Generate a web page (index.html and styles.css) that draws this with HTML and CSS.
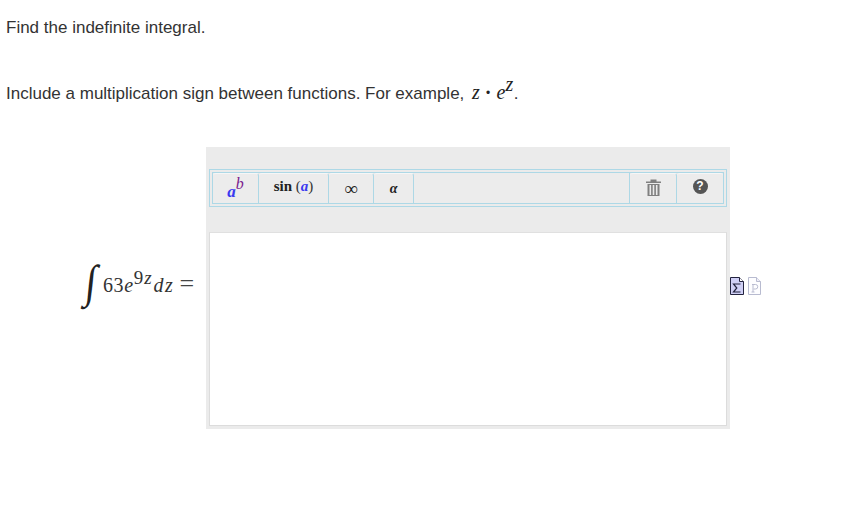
FILE: index.html
```html
<!DOCTYPE html>
<html lang="en">
<head>
<meta charset="utf-8">
<title>Find the indefinite integral</title>
<link rel="stylesheet" href="styles.css">
</head>
<body>
<p class="prompt first">Find the indefinite integral.</p>
<p class="prompt second">Include a multiplication sign between functions. For example, <span class="math inline-math"><i>z</i><span class="dot">·</span><i>e</i><sup class="sup-z"><i>z</i></sup></span>.</p>
<div class="question">
  <div class="label">
    <span class="integral">∫</span>
    <span class="math formula">63<i>e</i><sup class="sup-9">9<i>z</i></sup><i class="dz">dz</i><span class="equals">=</span></span>
  </div>
  <div class="editor">
    <div class="toolbar">
      <div class="toolbar-inner">
        <div class="tool tool-power"><span class="math"><i class="blue">a</i><sup class="purple"><i>b</i></sup></span></div>
        <div class="tool tool-sin"><span class="math sin">sin<span class="paren"> (</span><i class="blue">a</i><span class="paren">)</span></span></div>
        <div class="tool tool-inf"><span class="math">∞</span></div>
        <div class="tool tool-alpha"><span class="math"><i>α</i></span></div>
        <div class="tool tool-spacer"></div>
        <div class="tool tool-trash">
          <svg width="15" height="17" viewBox="0 0 15 17" aria-hidden="true">
            <path d="M0 2.500h15v1.500h-15zM4.500 0.500h6v2h-6z" fill="#808080"/>
            <path d="M1.500 5h12v12h-12zM3.500 6v10h1.600v-10zM6.700 6v10h1.600v-10zM9.900 6v10h1.600v-10z" fill="#808080" fill-rule="evenodd"/>
          </svg>
        </div>
        <div class="tool tool-help"><span class="help">?</span></div>
      </div>
    </div>
    <div class="answer"></div>
  </div>
  <div class="doc-icons">
    <svg width="14" height="18" viewBox="0 0 14 18" aria-hidden="true">
      <path d="M0.500 0.500h9l4 4v13h-13z" fill="#cfcff5" stroke="#23233f"/>
      <path d="M9.500 0.500v4h4" fill="#fff" stroke="#23233f"/>
      <path d="M10.500 15h-7l3.300-4-3.300-4h7" fill="none" stroke="#23233f" stroke-width="1.200"/>
    </svg>
    <svg width="13" height="18" viewBox="0 0 13 18" aria-hidden="true">
      <path d="M0.500 0.500h8l4 4v13h-12z" fill="#fdfdff" stroke="#b8bbd0"/>
      <path d="M8.500 0.500v4h4" fill="#eeeef8" stroke="#b8bbd0"/>
      <path d="M4 7.500h3.500a2 2 0 0 1 0 4.500h-2M5 7.500v7.500M3.500 15h3" fill="none" stroke="#b8bbd0"/>
    </svg>
  </div>
</div>
</body>
</html>
```

FILE: styles.css
```css
html, body {
  margin: 0;
  padding: 0;
  background: #fff;
}
body {
  width: 848px;
  height: 516px;
  overflow: hidden;
  font-family: "Liberation Sans", Arial, sans-serif;
  font-size: 17px;
  color: #333;
}
.prompt {
  margin: 0 0 0 6px;
  line-height: 20px;
  white-space: nowrap;
}
.first {
  padding-top: 18px;
}
.second {
  padding-top: 46px;
}
.math {
  font-family: "Liberation Serif", "Times New Roman", serif;
  color: #222;
}
.math sup {
  line-height: 0;
}
.inline-math {
  font-size: 20px;
  line-height: 0;
  margin-left: 3px;
}
.dot {
  margin: 0 5px 0 5px;
  font-weight: 700;
}
.sup-z {
  font-size: 20px;
  letter-spacing: 0.5px;
  vertical-align: 8px;
}
.question {
  display: flex;
  align-items: center;
  margin-top: 43px;
  margin-left: 79px;
}
.label {
  display: flex;
  align-items: center;
  width: 127px;
  height: 282px;
  flex: none;
  padding-bottom: 5px;
  box-sizing: border-box;
}
.integral {
  font-family: "Liberation Serif", serif;
  font-size: 40px;
  color: #222;
  width: 24px;
  line-height: 46px;
  margin-bottom: 7px;
  transform: skewX(-6deg) scaleY(1.15);
  display: block;
  text-align: center;
}
.formula {
  font-size: 20px;
  white-space: nowrap;
  color: #333;
  letter-spacing: 0.6px;
}
.sup-9 {
  font-size: 19px;
  letter-spacing: 1px;
  vertical-align: 8px;
}
.dz {
  margin-left: 1px;
  letter-spacing: 1.5px;
}
.equals {
  margin-left: 5px;
  color: #444;
  font-size: 26px;
  line-height: 0;
}
.editor {
  flex: none;
  width: 524px;
  height: 282px;
  box-sizing: border-box;
  background: #ebebeb;
  padding: 22px 3px 3px 3px;
  display: flex;
  flex-direction: column;
}
.toolbar {
  width: 518px;
  height: 38px;
  box-sizing: border-box;
  border: 1px solid #add8e6;
  padding: 2px;
}
.toolbar-inner {
  display: flex;
  height: 32px;
  box-sizing: border-box;
  border: 1px solid #add8e6;
}
.tool {
  flex: none;
  box-sizing: border-box;
  border-right: 1px solid #add8e6;
  border-top: 1px solid #f6f6f6;
  border-top-left-radius: 3px;
  border-top-right-radius: 3px;
  background: #ececec;
  display: flex;
  align-items: center;
  justify-content: center;
}
.tool .math {
  font-size: 15px;
  font-weight: 700;
  color: #222;
}
.tool-power { width: 46px; }
.tool-sin { width: 70px; }
.tool-inf { width: 45px; }
.tool-alpha { width: 40px; }
.tool-spacer {
  flex: 1;
  border-top: 0;
  border-radius: 0;
}
.tool-trash { width: 47px; }
.tool-help {
  width: 46px;
  border-right: 0;
}
.blue {
  color: #3a3af0;
}
.tool-power .math {
  font-size: 17px;
  position: relative;
  top: 3px;
}
.purple {
  color: #7a1a8c;
  font-size: 16px;
  font-weight: 400;
  vertical-align: 8px;
}
.tool-sin .math {
  position: relative;
  top: -2px;
}
.paren {
  color: #333;
  font-weight: 400;
}
.tool-inf .math {
  font-size: 19px;
  font-weight: 400;
}
.tool-alpha .math {
  font-size: 14px;
}
.help {
  width: 15px;
  height: 15px;
  border-radius: 50%;
  background: #555;
  color: #fff;
  font-family: "Liberation Sans", sans-serif;
  font-size: 12px;
  font-weight: 700;
  line-height: 15px;
  text-align: center;
  position: relative;
  top: -2px;
}
.tool-trash svg {
  position: relative;
  top: -1px;
}
.answer {
  margin-top: 25px;
  width: 518px;
  height: 194px;
  box-sizing: border-box;
  background: #fff;
  border: 1px solid #dcdcdc;
  border-top-color: #e0e0e0;
}
.doc-icons {
  display: flex;
  gap: 4px;
  position: relative;
  top: -2px;
}
```
